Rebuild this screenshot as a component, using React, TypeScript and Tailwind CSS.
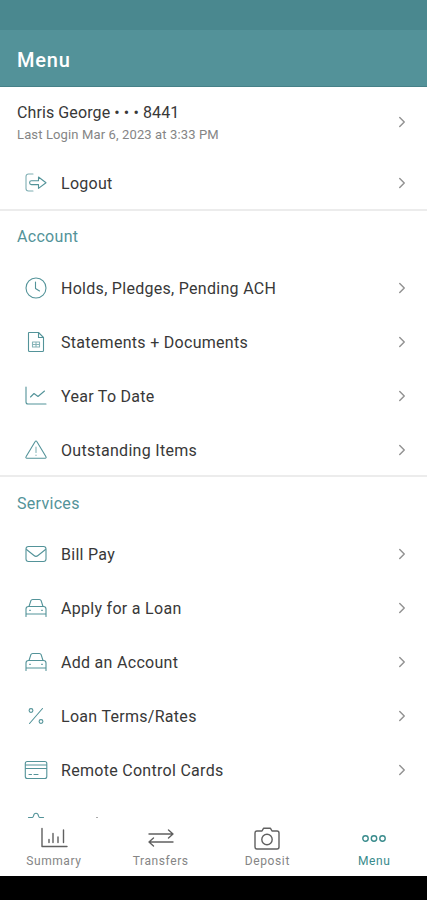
import React from 'react';
import { ChevronRight } from 'lucide-react';

interface IconProps {
  children: React.ReactNode;
}

const Icon: React.FC<IconProps> = ({ children }) => (
  <svg
    className="w-6 h-6 shrink-0"
    viewBox="0 0 24 24"
    fill="none"
    stroke="currentColor"
    strokeWidth="1.1"
    strokeLinecap="round"
    strokeLinejoin="round"
  >
    {children}
  </svg>
);

const LogoutIcon = () => (
  <Icon>
    <path d="M9 3H4.500A2.500 2.500 0 0 0 2 5.500v12A2.500 2.500 0 0 0 4.500 20H9" opacity=".75" />
    <path d="M7.500 9.800h7V6l7.500 5.700-7.500 5.700v-3.800h-7a1.900 1.900 0 0 1 0-3.800z" />
  </Icon>
);

const ClockIcon = () => (
  <Icon>
    <circle cx="12" cy="12" r="10" />
    <path d="M11.500 6v6.500l4 2.500" />
  </Icon>
);

const DocumentIcon = () => (
  <Icon>
    <path d="M5 2.500h9.500l5 5v13a1 1 0 0 1-1 1H5.500a1 1 0 0 1-1-1V3a.5.5 0 0 1 .5-.5z" />
    <path d="M14.500 2.500v5h5" />
    <path d="M8.500 12h7M8.500 14.500h7M8.500 17h7M8.500 12v5M15.500 12v5M12 12v5" opacity=".7" />
  </Icon>
);

const ChartLineIcon = () => (
  <Icon>
    <path d="M2 3v15a2 2 0 0 0 2 2h18" />
    <path d="m6.500 13 3.500-3.500 4 3L20.500 7" />
  </Icon>
);

const WarningIcon = () => (
  <Icon>
    <path d="M11.200 3.500a.9.900 0 0 1 1.600 0L22 18.800a.9.900 0 0 1-.8 1.400H2.800a.9.900 0 0 1-.8-1.400z" />
    <path d="M12 9v5.500M12 17v.4" opacity=".7" />
  </Icon>
);

const MailIcon = () => (
  <Icon>
    <rect x="2" y="4.500" width="20" height="15" rx="2.500" />
    <path d="m2.500 7.500 7.500 6a3 3 0 0 0 4 0l7.500-6" />
  </Icon>
);

const CarIcon = () => (
  <Icon>
    <path d="M2 20.500v-7.500a2.500 2.500 0 0 1 2.500-2.500h15a2.500 2.500 0 0 1 2.500 2.500v7.500M2 18h20" />
    <path d="m5 10.500 1.800-5.700a2 2 0 0 1 1.900-1.300h6.600a2 2 0 0 1 1.900 1.300l1.800 5.700M5.500 14.200h1M17.500 14.200h1" />
  </Icon>
);

const PercentIcon = () => (
  <Icon>
    <path d="M18.500 4.500 5.500 19.500" />
    <circle cx="7" cy="6.500" r="1.900" />
    <circle cx="17" cy="17.500" r="1.900" />
  </Icon>
);

const CardIcon = () => (
  <Icon>
    <rect x="1.300" y="3.500" width="21.500" height="17" rx="2" />
    <path d="M1.500 7h21M1.500 10.500h21M5 16.500h2.500M10 16.500h4" />
  </Icon>
);

const PuzzleIcon = () => (
  <Icon>
    <path d="M4.500 21.500v-15H8c1 0 1.300-.5 1.500-1.500C9.800 3.300 10.500 2.200 12 2.200s2.200 1.100 2.500 2.800c.2 1 .5 1.500 1.500 1.500h3.500v15z" />
  </Icon>
);

interface MenuItem {
  label: string;
  icon: React.ReactNode;
}

const accountItems: MenuItem[] = [
  { label: 'Holds, Pledges, Pending ACH', icon: <ClockIcon /> },
  { label: 'Statements + Documents', icon: <DocumentIcon /> },
  { label: 'Year To Date', icon: <ChartLineIcon /> },
  { label: 'Outstanding Items', icon: <WarningIcon /> },
];

const serviceItems: MenuItem[] = [
  { label: 'Bill Pay', icon: <MailIcon /> },
  { label: 'Apply for a Loan', icon: <CarIcon /> },
  { label: 'Add an Account', icon: <CarIcon /> },
  { label: 'Loan Terms/Rates', icon: <PercentIcon /> },
  { label: 'Remote Control Cards', icon: <CardIcon /> },
];

const Chevron = () => <ChevronRight className="w-[18px] h-[18px] ml-auto text-[#929292]" strokeWidth={1.9} />;

const MenuRow: React.FC<{ item: MenuItem }> = ({ item }) => (
  <button className="w-full h-[54px] shrink-0 flex items-center pl-6 pr-4 text-left">
    <span className="text-[#539399]">{item.icon}</span>
    <span className="ml-[13px] pt-0.5 text-base leading-6 tracking-[0.29px]">{item.label}</span>
    <Chevron />
  </button>
);

const tabs = [
  {
    label: 'Summary',
    icon: <path d="M2 2.500v18h25M9 16.500v-3M13 16.500v-9M18 16.500V11M23.500 16.500V4" />,
  },
  {
    label: 'Transfers',
    icon: <path d="M2 8h24M21.500 4l4.500 4-4.500 4M26 16H2M6.500 12 2 16l4.500 4" />,
  },
  {
    label: 'Deposit',
    icon: (
      <>
        <path d="M4 5h5l1.500-2.700h7L19 5h5a2 2 0 0 1 2 2v14a2 2 0 0 1-2 2H4a2 2 0 0 1-2-2V7a2 2 0 0 1 2-2z" />
        <circle cx="14" cy="13.500" r="5.200" />
      </>
    ),
  },
  {
    label: 'Menu',
    active: true,
    icon: (
      <>
        <circle cx="5.500" cy="12.500" r="2.700" />
        <circle cx="14" cy="12.500" r="2.700" />
        <circle cx="22.500" cy="12.500" r="2.700" />
      </>
    ),
  },
];

const App: React.FC = () => {
  return (
    <div className="w-full h-[900px] flex flex-col overflow-hidden bg-white text-[#383838] font-['Roboto',sans-serif]">
      <div className="h-[30px] shrink-0 bg-[#4a888f]" />
      <header className="h-[57px] shrink-0 flex items-center px-[17px] pt-1 bg-[#539299] border-b border-[#468188]">
        <h1 className="text-xl font-medium text-white tracking-[0.8px]">Menu</h1>
      </header>

      <main className="flex-1 min-h-0 flex flex-col overflow-hidden">
        <section className="h-[124px] shrink-0 border-b-2 border-[#ececec]">
          <button className="w-full h-[69px] flex items-center pl-[17px] pr-4 text-left">
            <span className="pt-[3px]">
              <span className="block text-base leading-6 tracking-[0.1px]">Chris George • • • 8441</span>
              <span className="block text-[13px] leading-5 tracking-[0.13px] text-[#858585]">
                Last Login Mar 6, 2023 at 3:33 PM
              </span>
            </span>
            <Chevron />
          </button>
          <MenuRow item={{ label: 'Logout', icon: <LogoutIcon /> }} />
        </section>

        <section className="h-[266px] shrink-0 border-b-2 border-[#ececec]">
          <h2 className="h-[50px] flex items-center px-[17px] pt-0.5 text-base tracking-[0.3px] text-[#539399]">
            Account
          </h2>
          {accountItems.map((item) => (
            <MenuRow key={item.label} item={item} />
          ))}
        </section>

        <section>
          <h2 className="h-[50px] flex items-center px-[17px] pt-[3px] text-base tracking-[0.3px] text-[#539399]">
            Services
          </h2>
          {serviceItems.map((item) => (
            <MenuRow key={item.label} item={item} />
          ))}
          {/* next row, scrolled under the tab bar */}
          <div className="h-[54px] flex items-start pl-6 pt-[14px] text-[#539399]">
            <PuzzleIcon />
            <span className="w-0.5 h-2 ml-12 mt-1.5 bg-[#aaaaaa]" />
          </div>
        </section>
      </main>

      <nav className="h-[58px] shrink-0 grid grid-cols-4 bg-white">
        {tabs.map((tab) => (
          <button
            key={tab.label}
            className={`flex flex-col items-center pt-2 pl-px ${tab.active ? 'text-[#398b8c]' : 'text-[#606060]'}`}
          >
            <svg
              className="w-7 h-6"
              viewBox="0 0 28 24"
              fill="none"
              stroke="currentColor"
              strokeWidth="1.4"
              strokeLinecap="round"
              strokeLinejoin="round"
            >
              {tab.icon}
            </svg>
            <span className={`mt-0.5 text-xs leading-[18px] tracking-[0.6px] ${tab.active ? '' : 'text-[#858585]'}`}>
              {tab.label}
            </span>
          </button>
        ))}
      </nav>
      <div className="h-6 shrink-0 bg-black" />
    </div>
  );
};

export default App;
